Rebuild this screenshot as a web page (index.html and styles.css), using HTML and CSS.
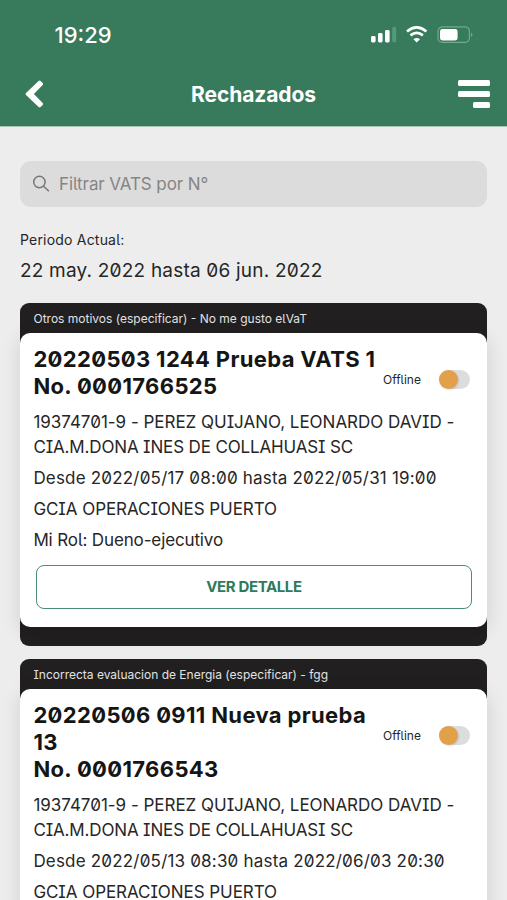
FILE: index.html
```html
<!DOCTYPE html>
<html lang="es">
<head>
<meta charset="utf-8">
<meta name="viewport" content="width=device-width, initial-scale=1">
<title>Rechazados</title>
<link rel="stylesheet" href="styles.css">
</head>
<body>
<header class="header">
  <div class="status">
    <span class="clock">19:29</span>
    <svg class="status-icons" width="104" height="20" viewBox="0 0 104 20">
      <g fill="#fff">
        <rect x="1" y="12" width="4.6" height="6.5" rx="1.4"/>
        <rect x="8" y="9" width="4.6" height="9.5" rx="1.4"/>
        <rect x="15" y="6" width="4.6" height="12.5" rx="1.4"/>
        <rect x="22.2" y="3" width="4" height="15.5" rx="1.4" fill="#4f9b7b"/>
        <path d="M46.7 18.4L43.4 15.2Q46.7 12.7 50 15.2Z"/>
      </g>
      <g fill="none" stroke="#fff" stroke-width="2.7">
        <path d="M37 7.5Q46.7-.6 56.4 7.5"/>
        <path d="M40.5 11.4Q46.7 6.2 52.9 11.4"/>
      </g>
      <rect x="68" y="2.8" width="31.4" height="15.6" rx="4.4" fill="none" stroke="#72a98f" stroke-width="1.2"/>
      <rect x="70" y="5" width="17.6" height="11.4" rx="2.4" fill="#fff"/>
      <path d="M101 8.4q3 2.3 0 4.6z" fill="#72a98f"/>
    </svg>
  </div>
  <div class="navbar">
    <svg class="back" width="20" height="28" viewBox="0 0 20 28"><path d="M14.6.9Q15.6 0 16.6.9L18.7 3Q19.6 4 18.7 5L9.9 14L18.7 23Q19.6 24 18.7 25L16.6 27.1Q15.6 28 14.6 27.1L2 15Q1 14 2 13Z" fill="#fff"/></svg>
    <h1 class="heading">Rechazados</h1>
    <div class="menu"><i></i><i></i><i class="short"></i></div>
  </div>
</header>
<main class="content">
  <div class="search">
    <svg width="18" height="18" viewBox="0 0 18 18" fill="none" stroke="#777" stroke-width="1.5"><circle cx="7.4" cy="7" r="5.7"/><path d="M11.6 11.2L16.9 16.3"/></svg>
    <span class="placeholder">Filtrar VATS por N°</span>
  </div>
  <p class="period-label">Periodo Actual:</p>
  <p class="period">22 may. 2022 hasta 06 jun. 2022</p>

  <article class="card">
    <p class="reason">Otros motivos (especificar) - No me gusto elVaT</p>
    <div class="panel">
      <div class="top">
        <h2 class="title">20220503 1244 Prueba VATS 1<br>No. 0001766525</h2>
        <span class="offline">Offline</span>
        <span class="switch"></span>
      </div>
      <p class="line person">19374701-9 - PEREZ QUIJANO, LEONARDO DAVID -<br><span class="company">CIA.M.DONA INES DE COLLAHUASI SC</span></p>
      <p class="line dates">Desde 2022/05/17 08:00 hasta 2022/05/31 19:00</p>
      <p class="line area">GCIA OPERACIONES PUERTO</p>
      <p class="line role">Mi Rol: Dueno-ejecutivo</p>
      <div class="button">VER DETALLE</div>
    </div>
  </article>

  <article class="card">
    <p class="reason">Incorrecta evaluacion de Energia (especificar) - fgg</p>
    <div class="panel">
      <div class="top">
        <h2 class="title">20220506 0911 Nueva prueba<br>13<br>No. 0001766543</h2>
        <span class="offline">Offline</span>
        <span class="switch"></span>
      </div>
      <p class="line person">19374701-9 - PEREZ QUIJANO, LEONARDO DAVID -<br><span class="company">CIA.M.DONA INES DE COLLAHUASI SC</span></p>
      <p class="line dates">Desde 2022/05/13 08:30 hasta 2022/06/03 20:30</p>
      <p class="line area">GCIA OPERACIONES PUERTO</p>
    </div>
  </article>
</main>
</body>
</html>
```

FILE: styles.css
```css
* { box-sizing: border-box; margin: 0; padding: 0; }
html, body { height: 900px; overflow: hidden; }
body {
  display: flex;
  flex-direction: column;
  background: #ededed;
  color: #262626;
  font-family: Inter, "Noto Sans", sans-serif;
  font-feature-settings: "ss02", "zero";
  white-space: nowrap;
}
.header { flex: none; height: 127px; background: #377a5c; border-bottom: 1px solid #a9c5b8; color: #fff; }
.status { display: flex; justify-content: space-between; height: 69px; padding: 23px 33px 0 54.5px; }
.status-icons { margin-top: 1px; }
.clock { font-size: 22px; line-height: 24px; font-weight: 500; font-feature-settings: normal; }
.navbar { display: grid; grid-template-columns: 60px 1fr 60px; align-items: center; height: 50px; padding: 0 17px 0 24px; }
.heading { padding-right: 7px; text-align: center; font-size: 21px; font-weight: 700; letter-spacing: -.1px; }
.menu { display: flex; flex-direction: column; align-items: flex-end; gap: 5.5px; }
.menu i { width: 32px; height: 5.8px; border-radius: 1.5px; background: #fff; }
.menu .short { width: 17px; }
.content { flex: none; padding: 34px 20px 0; }
.search { display: flex; align-items: center; gap: 9px; height: 46px; padding-left: 12px; border-radius: 11px; background: #dcdcdc; color: #858585; }
.placeholder { font-size: 17px; letter-spacing: -.1px; }
.period-label { margin-top: 23px; font-size: 14px; line-height: 20px; letter-spacing: .2px; }
.period { margin-top: 8px; font-size: 19px; line-height: 26px; letter-spacing: .2px; }
.card { margin-top: 13px; padding-bottom: 19px; border-radius: 9px; background: #211f20; }
.period + .card { margin-top: 19px; }
.reason { height: 30px; padding-left: 13.5px; color: #e2e2e2; font-size: 12px; line-height: 31px; }
.panel { padding: 13px 14px 18px 13.4px; border-radius: 10px; background: #fff; box-shadow: 0 4px 20px rgba(0, 0, 0, .13); }
.top { display: flex; align-items: flex-start; }
.title { width: 349.6px; color: #151515; font-size: 22px; line-height: 27px; font-weight: 700; letter-spacing: .35px; }
.offline { width: 56px; margin-top: 24px; font-size: 12px; line-height: 19px; }
.switch { width: 31px; height: 19px; margin-top: 24px; border-radius: 10px; background: #ddd; }
.switch::before { content: ""; display: block; width: 19px; height: 19px; border-radius: 50%; background: #e3a04a; box-shadow: 1px 1px 2px rgba(0, 0, 0, .12); }
.line { margin-top: 6px; font-size: 17px; line-height: 25px; }
.person { margin-top: 10px; letter-spacing: -.02px; }
.company { letter-spacing: -.15px; }
.dates { letter-spacing: .19px; }
.area { letter-spacing: -.06px; }
.role { letter-spacing: -.13px; }
.button { display: flex; align-items: center; justify-content: center; height: 44px; margin: 12px 1px 0 2.6px; padding-bottom: 2px; border: 1px solid #4a8d71; border-radius: 8px; color: #2d7b5a; font-size: 15px; font-weight: 700; letter-spacing: -.38px; }
```
